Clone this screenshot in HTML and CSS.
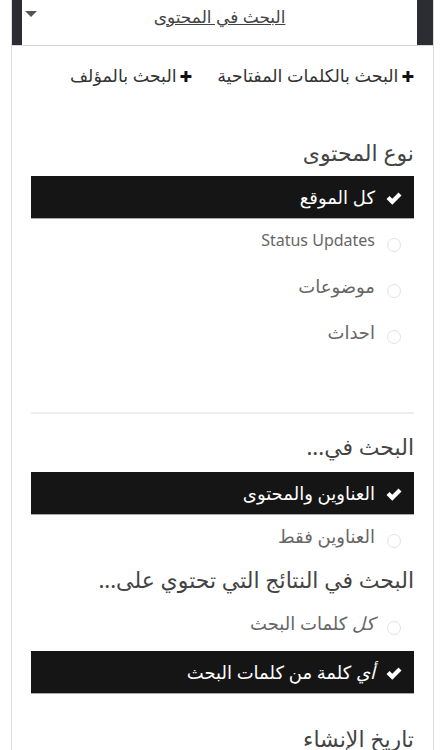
FILE: index.html
```html
<!DOCTYPE html>
<html lang="ar" dir="rtl">
<head>
    <meta charset="UTF-8">
    <meta name="viewport" content="width=device-width, initial-scale=1.0">
    <title>البحث</title>
    <link rel="stylesheet" href="styles.css">
</head>
<body>

    <div class="panel">
        <div class="topbar">
            <div class="dropdown">
                <span class="dropdown-title">البحث في المحتوى</span>
                <span class="caret"></span>
            </div>
        </div>

        <div class="content">
            <div class="links">
                <a href="#" class="add-link"><span class="plus">✚</span>البحث بالكلمات المفتاحية</a>
                <a href="#" class="add-link"><span class="plus">✚</span>البحث بالمؤلف</a>
            </div>

            <h2 class="section-title first">نوع المحتوى</h2>
            <ul class="options">
                <li class="option selected"><span class="mark"><svg viewBox="0 0 16 13" width="16" height="13"><path d="M0.5 7 L3.5 4 L6.3 6.8 L12.5 0.6 L15.5 3.6 L6.3 12.8 Z" fill="#fff"/></svg></span>كل الموقع</li>
                <li class="option"><span class="mark"><span class="radio"></span></span><span class="latin">Status Updates</span></li>
                <li class="option"><span class="mark"><span class="radio"></span></span>موضوعات</li>
                <li class="option"><span class="mark"><span class="radio"></span></span>احداث</li>
            </ul>

            <hr class="divider">

            <h2 class="section-title">البحث في...</h2>
            <ul class="options">
                <li class="option selected"><span class="mark"><svg viewBox="0 0 16 13" width="16" height="13"><path d="M0.5 7 L3.5 4 L6.3 6.8 L12.5 0.6 L15.5 3.6 L6.3 12.8 Z" fill="#fff"/></svg></span>العناوين والمحتوى</li>
                <li class="option"><span class="mark"><span class="radio"></span></span>العناوين فقط</li>
            </ul>

            <h2 class="section-title tight">البحث في النتائج التي تحتوي على...</h2>
            <ul class="options">
                <li class="option"><span class="mark"><span class="radio"></span></span><span><em>كل</em> كلمات البحث</span></li>
                <li class="option selected"><span class="mark"><svg viewBox="0 0 16 13" width="16" height="13"><path d="M0.5 7 L3.5 4 L6.3 6.8 L12.5 0.6 L15.5 3.6 L6.3 12.8 Z" fill="#fff"/></svg></span><span><em>أي</em> كلمة من كلمات البحث</span></li>
            </ul>

            <h2 class="section-title last">تاريخ الإنشاء</h2>
        </div>
    </div>

</body>
</html>
```

FILE: styles.css
```css
body {
    font-family: "Noto Sans", "DejaVu Sans", sans-serif;
    background-color: #fff;
    color: #444;
    margin: 0;
    padding: 0;
}

.panel {
    margin: 0 11px;
    border-left: 1px solid #ddd;
    border-right: 1px solid #ddd;
    background-color: #fff;
    min-height: 750px;
}

.topbar {
    background-color: #2b2d33;
    padding: 0 16px 0 10px;
    border-bottom: 1px solid #d6d6d6;
}

.dropdown {
    background-color: #fff;
    height: 45px;
    display: flex;
    align-items: center;
    justify-content: center;
    position: relative;
}

.dropdown-title {
    font-size: 17px;
    line-height: 24px;
    color: #444;
    text-decoration: underline;
    margin-bottom: 12px;
}

.caret {
    position: absolute;
    left: 3px;
    top: 11px;
    width: 0;
    height: 0;
    border-left: 6px solid transparent;
    border-right: 6px solid transparent;
    border-top: 6px solid #555;
}

.content {
    padding: 0 19px;
}

.links {
    display: flex;
    gap: 25px;
    padding-top: 17px;
    line-height: 24px;
}

.add-link {
    color: #333;
    text-decoration: none;
    font-size: 17.5px;
}

.plus {
    color: #111;
    font-size: 15px;
    margin-left: 3px;
}

.section-title {
    font-size: 22px;
    line-height: 30px;
    font-weight: normal;
    color: #444;
    margin: 17px 0 11px;
}

.section-title.first {
    margin: 49px 0 9px;
}

.section-title.tight {
    margin-top: 0;
    margin-bottom: 11px;
}

.section-title.last {
    margin-top: 29px;
}

.options {
    list-style-type: none;
    margin: 0;
    padding: 0;
}

.option {
    box-sizing: border-box;
    display: flex;
    align-items: center;
    height: 43px;
    padding-right: 12px;
    padding-bottom: 8px;
    font-size: 18px;
    color: #666;
    margin-bottom: 3px;
}

.option.selected {
    padding-bottom: 1px;
    background-color: #151515;
    color: #fff;
    border-bottom: 1px solid #aaa;
}

.latin {
    font-size: 16px;
}

.mark {
    width: 16px;
    display: flex;
    justify-content: center;
    margin-left: 11px;
    margin-top: 10px;
}

.selected .mark {
    margin-top: 4px;
}

.radio {
    width: 12px;
    height: 12px;
    border: 1.5px solid #e2e2e2;
    border-radius: 50%;
}

.divider {
    border: none;
    border-top: 2px solid #eee;
    margin: 55px 0 0;
}
```
